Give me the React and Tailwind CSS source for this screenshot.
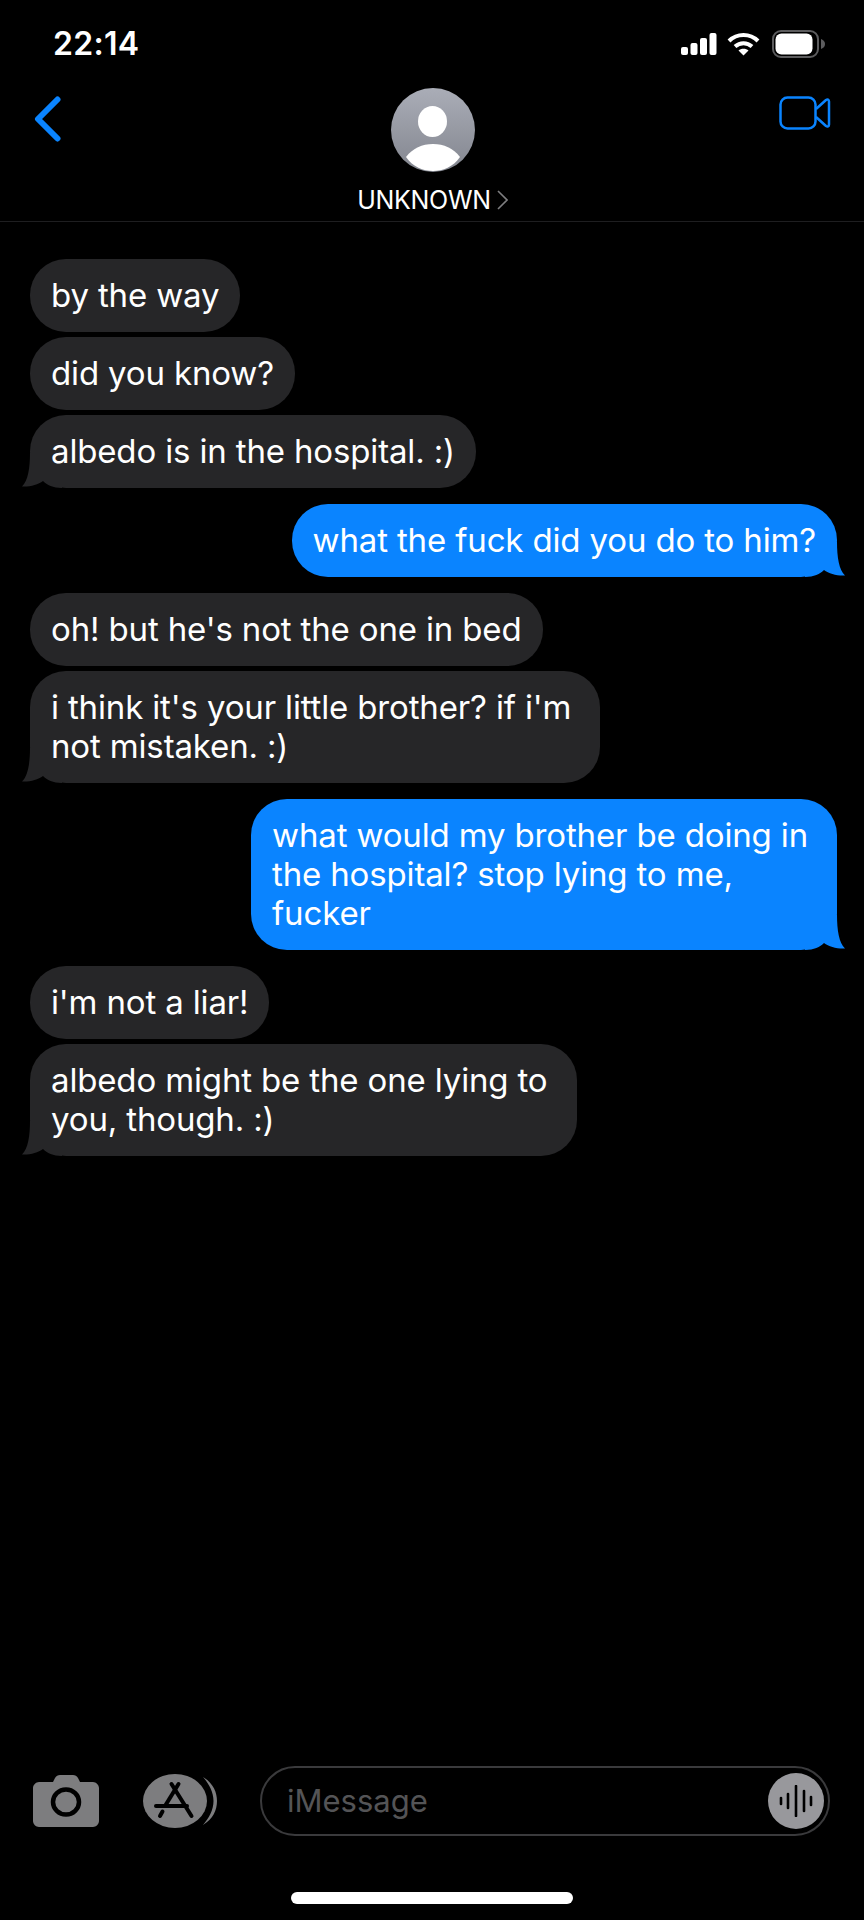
import React from 'react';

const font = { fontFamily: 'Inter, "Liberation Sans", sans-serif' };

const threads = [
  { side: 'in', text: ['by the way'] },
  { side: 'in', text: ['did you know?'] },
  { side: 'in', tail: true, text: ['albedo is in the hospital. :)'] },
  { side: 'out', tail: true, text: ['what the fuck did you do to him?'] },
  { side: 'in', text: ["oh! but he's not the one in bed"] },
  { side: 'in', tail: true, text: ["i think it's your little brother? if i'm", 'not mistaken. :)'] },
  { side: 'out', tail: true, text: ['what would my brother be doing in', 'the hospital? stop lying to me,', 'fucker'] },
  { side: 'in', text: ["i'm not a liar!"] },
  { side: 'in', tail: true, text: ['albedo might be the one lying to', 'you, though. :)'] },
];

const Tail = ({ isOut }) => (
  <svg
    className={`absolute bottom-0 ${isOut ? 'right-[-8px] -scale-x-100' : 'left-[-8px]'}`}
    width="40"
    height="36"
    viewBox="0 0 40 36"
  >
    <path
      d="M8 1 C8 16 6 29 0 34.500 C8 35 16 32.500 21 29 C25 33 31 36 40 36 L40 1 Z"
      fill={isOut ? '#0a84ff' : '#262628'}
    />
  </svg>
);

const Bubble = ({ side, tail, text, next }) => {
  const isOut = side === 'out';
  const gap = !next ? 'mb-0' : next === side ? 'mb-[5px]' : 'mb-4';
  // wrapped messages leave some slack on the right
  const padRight = text.length > 1 ? 'pr-[29px]' : 'pr-[21px]';
  return (
    <div className={`relative w-fit rounded-[36px] pl-[21px] py-[17px] text-[33px] leading-[39px] tracking-[-0.15px] text-white whitespace-nowrap ${padRight} ${gap} ${isOut ? 'self-end bg-[#0a84ff]' : 'self-start bg-[#262628]'}`}>
      {tail && <Tail isOut={isOut} />}
      {text.map((line) => <div key={line} className="relative">{line}</div>)}
    </div>
  );
};

const StatusIcons = () => (
  <div className="flex items-center">
    <svg width="36" height="24" viewBox="0 0 36 24" fill="#fff">
      <rect x="0" y="15" width="7" height="8" rx="2" />
      <rect x="9.500" y="11" width="7" height="12" rx="2" />
      <rect x="19" y="6" width="7" height="17" rx="2" />
      <rect x="28.500" y="1" width="7" height="22" rx="2" />
    </svg>
    <svg className="ml-[10px]" width="33" height="24" viewBox="0 0 33 24" fill="none" stroke="#fff" strokeWidth="4">
      <path d="M2 9 C10 1 23 1 31 9" />
      <path d="M8 14.500 C13 10 20 10 25 14.500" />
      <path d="M16.500 23.500 L11.500 18.500 C14 16 19 16 21.500 18.500 Z" fill="#fff" stroke="none" />
    </svg>
    <svg className="ml-[12px]" width="54" height="28" viewBox="0 0 54 28">
      <rect x="1" y="1" width="45" height="26" rx="8" fill="none" stroke="#5c5c5e" strokeWidth="2" />
      <rect x="3.500" y="3.500" width="37" height="21" rx="6" fill="#fff" />
      <path d="M49 9 C52 10 53 12 53 14 C53 16 52 18 49 19 Z" fill="#5c5c5e" />
    </svg>
  </div>
);

const Avatar = () => (
  <svg width="84" height="84" viewBox="0 0 84 84">
    <defs>
      <linearGradient id="avatarFill" x1="0" y1="0" x2="0" y2="1">
        <stop offset="0" stopColor="#aaadb7" />
        <stop offset="1" stopColor="#83868f" />
      </linearGradient>
    </defs>
    <circle cx="42" cy="42" r="42" fill="url(#avatarFill)" />
    <ellipse cx="41.500" cy="33.500" rx="14.500" ry="15.500" fill="#fff" />
    <path d="M15 69 C22 60 31 56 42 56 C53 56 62 60 69 69 C62 79 52 83 42 83 C32 83 22 79 15 69 Z" fill="#fff" />
  </svg>
);

const Header = () => (
  <header className="h-[222px] border-b border-[#1e1e20] bg-black">
    <div className="flex h-[64px] items-center justify-between pl-[53px] pr-[38px] pt-[24px]">
      <span className="text-[32px] leading-[36px] font-semibold tracking-[0.3px] text-white">22:14</span>
      <StatusIcons />
    </div>
    <div className="flex justify-between pl-[34px] pr-[33px] pt-[8px]">
      <svg className="mt-[24px]" width="27" height="46" viewBox="0 0 27 46" fill="none" stroke="#0a84ff" strokeWidth="6" strokeLinecap="round" strokeLinejoin="round">
        <path d="M23.500 3.500 L4 23 L23.500 42.500" />
      </svg>
      <div className="ml-[25px] mt-[16px] flex flex-col items-center">
        <Avatar />
        <div className="mt-[13px] flex items-center">
          <span className="text-[25px] leading-[30px] tracking-[-0.3px] text-white">UNKNOWN</span>
          <svg className="ml-[6px]" width="11" height="20" viewBox="0 0 11 20" fill="none" stroke="#7e7e80" strokeWidth="1.600">
            <path d="M1 1 L10 10 L1 19" />
          </svg>
        </div>
      </div>
      <svg className="mt-[24px]" width="52" height="34" viewBox="0 0 52 34" fill="none" stroke="#0a84ff" strokeWidth="2.500" strokeLinejoin="round">
        <rect x="1.500" y="1.500" width="35" height="31" rx="7" />
        <path d="M37 13 L47 4 C48.500 3 50 3.500 50 5.500 V28.500 C50 30.500 48.500 31 47 30 L37 21" />
      </svg>
    </div>
  </header>
);

const Composer = () => (
  <footer className="h-[154px] bg-black pl-[33px] pr-[34px]">
    <div className="flex h-[70px] items-center">
      <svg width="66" height="52" viewBox="0 0 66 52">
        <path d="M6 7 H20 L22 3 C23 1 25 0 27 0 H40 C42 0 44 1 45 3 L47 7 H60 C63 7 66 10 66 13 V46 C66 49 63 52 60 52 H6 C3 52 0 49 0 46 V13 C0 10 3 7 6 7 Z" fill="#7d7d7f" />
        <ellipse cx="33" cy="27" rx="13" ry="12.500" fill="none" stroke="#000" strokeWidth="4.500" />
      </svg>
      <svg className="ml-[44px]" width="74" height="54" viewBox="0 0 74 54">
        <ellipse cx="32" cy="27" rx="32" ry="27" fill="#7d7d7f" />
        <path d="M60 3 C70 9 74 18 74 27 C74 36 70 45 60 51 C66 44 70.500 36 70.500 27 C70.500 18 66 10 60 3 Z" fill="#7d7d7f" />
        <g stroke="#000" strokeWidth="4" strokeLinecap="round" fill="none">
          <path d="M28.500 10 L48.500 42" />
          <path d="M35.500 10 L22 32" />
          <path d="M19.500 37.500 L17 42" />
          <path d="M13 32 H44" />
        </g>
      </svg>
      <div className="ml-[43px] flex h-[70px] flex-1 items-center justify-between rounded-full border-[2px] border-[#3a3a3c] pl-[25px] pr-[4px]">
        <span className="text-[31px] text-[#545456]">iMessage</span>
        <div className="flex h-[56px] w-[56px] items-center justify-center rounded-full bg-[#98989c]">
          <svg width="34" height="32" viewBox="0 0 34 32" stroke="#000" strokeWidth="2.600" strokeLinecap="round">
            <path d="M2 13 V19" />
            <path d="M9 9 V23" />
            <path d="M17 1 V31" />
            <path d="M25 6 V26" />
            <path d="M32 12 V20" />
          </svg>
        </div>
      </div>
    </div>
    <div className="ml-[258px] mt-[56px] h-[12px] w-[282px] rounded-full bg-white" />
  </footer>
);

export default function App() {
  return (
    <div className="flex h-[1920px] w-[864px] flex-col bg-black" style={font}>
      <Header />
      <main className="flex flex-1 flex-col pl-[30px] pr-[27px] pt-[37px]">
        {threads.map((m, i) => (
          <Bubble key={i} {...m} next={threads[i + 1]?.side} />
        ))}
      </main>
      <Composer />
    </div>
  );
}
